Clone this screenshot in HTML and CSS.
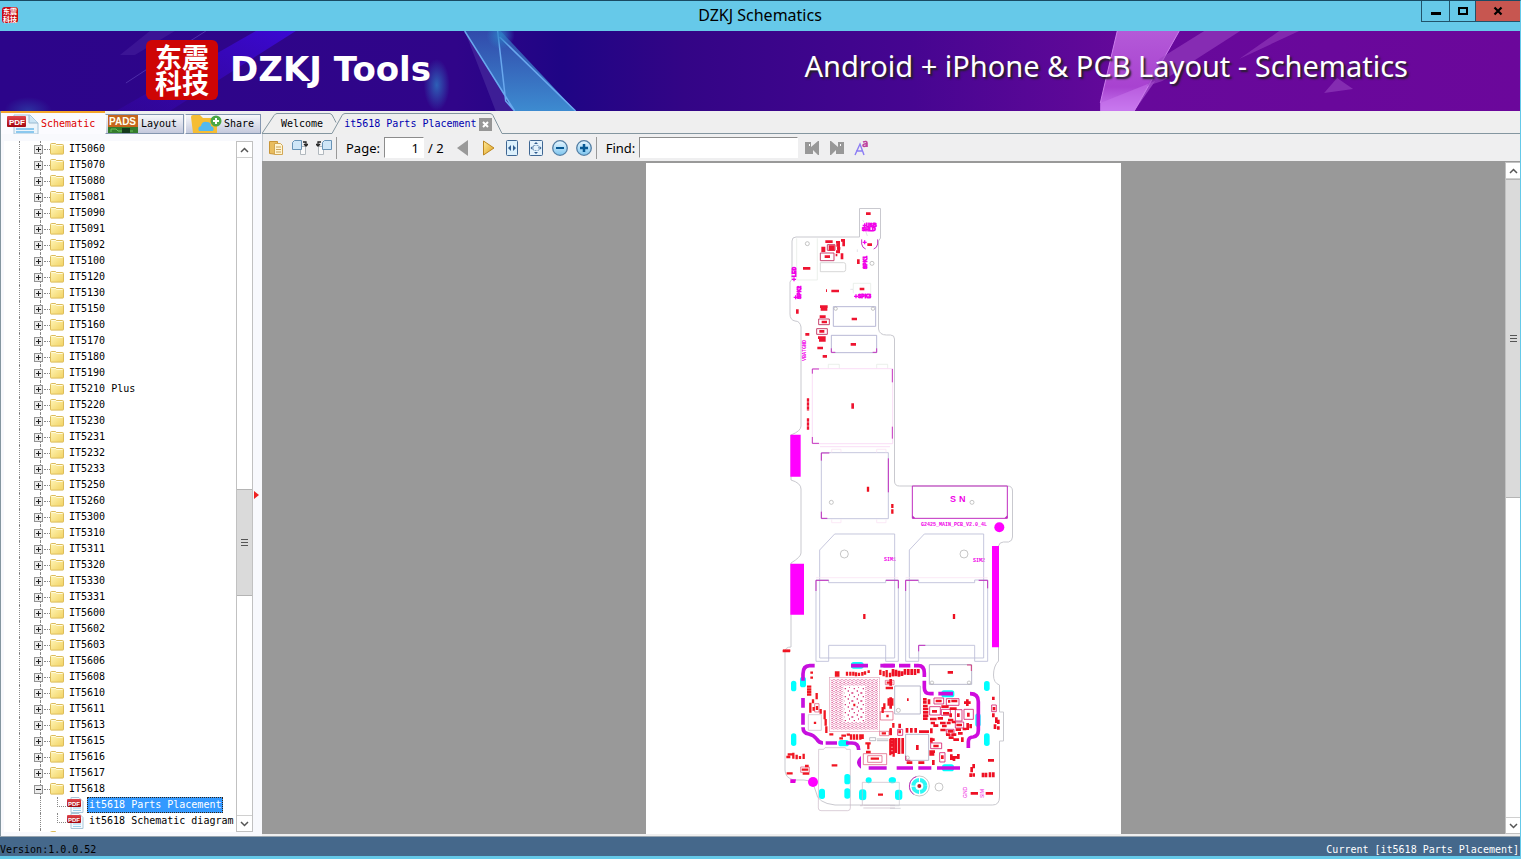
FILE: index.html
```html
<!DOCTYPE html>
<html lang="en">
<head>
<meta charset="utf-8">
<title>DZKJ Schematics</title>
<link rel="stylesheet" href="styles.css">
</head>
<body>
<svg class="defs" aria-hidden="true">
  <defs>
    <linearGradient id="gFolder" x1="0" y1="0" x2="1" y2="1"><stop offset="0" stop-color="#fff6b8"/><stop offset="1" stop-color="#f2d262"/></linearGradient>
    <linearGradient id="gRed" x1="0" y1="0" x2="0" y2="1"><stop offset="0" stop-color="#e2474d"/><stop offset="1" stop-color="#a3060f"/></linearGradient>
    <linearGradient id="gBlue" x1="0" y1="0" x2="0" y2="1"><stop offset="0" stop-color="#e8f7ff"/><stop offset="1" stop-color="#7cc4ee"/></linearGradient>
    <linearGradient id="gGold" x1="0" y1="0" x2="1" y2="1"><stop offset="0" stop-color="#ffeb9a"/><stop offset="1" stop-color="#dd9f1e"/></linearGradient>
    <symbol id="folder" viewBox="0 0 14 14"><path d="M.5 11.500V2.500q0-1 1-1h4l1 1h6q1 0 1 1v8q0 .6-.6.6H1q-.5 0-.5-.6z" fill="url(#gFolder)" stroke="#dcbc5c"/><path d="M1.500 2.500h4l1 1h6" fill="none" stroke="#fffbe0"/></symbol>
    <symbol id="pdf" viewBox="0 0 17 16"><path d="M4 .5h8l4 4v11H4z" fill="#f5faff" stroke="#aac6d8"/><path d="M6 11h8M6 13.500h8" stroke="#9bd0ec"/><rect y="2" width="14" height="8" rx="1" fill="url(#gRed)"/><text x="1" y="9" font-size="6" font-weight="bold" font-family="Liberation Sans" fill="#fff">PDF</text></symbol>
    <symbol id="up" viewBox="0 0 9 6"><path d="M1 5l3.500-3.500L8 5" fill="none" stroke="#555" stroke-width="1.500"/></symbol>
    <symbol id="down" viewBox="0 0 9 6"><path d="M1 1l3.500 3.500L8 1" fill="none" stroke="#555" stroke-width="1.500"/></symbol>
  </defs>
</svg>
<div class="window">
  <header class="titlebar">
    <span class="mini-logo">东震<br>科技</span>
    <h1>DZKJ Schematics</h1>
    <div class="controls">
      <button class="min" aria-label="Minimize"><svg width="12" height="12"><path d="M1 8.500h10" stroke="#000" stroke-width="3"/></svg></button>
      <button class="max" aria-label="Maximize"><svg width="12" height="12"><path d="M2 3h8v6H2z" fill="none" stroke="#000" stroke-width="2"/></svg></button>
      <button class="close" aria-label="Close"><svg width="12" height="12"><path d="M2.500 2.500l7 7M9.500 2.500l-7 7" stroke="#000" stroke-width="2.200"/></svg></button>
    </div>
  </header>

  <div class="banner">
    <svg class="banner-art" viewBox="0 0 1521 80" preserveAspectRatio="none" aria-hidden="true">
      <defs>
        <linearGradient id="bBase"><stop offset="0" stop-color="#2c058a"/><stop offset=".3" stop-color="#300589"/><stop offset=".37" stop-color="#1f0585"/><stop offset=".45" stop-color="#330586"/><stop offset=".6" stop-color="#460591"/><stop offset=".75" stop-color="#67099b"/><stop offset="1" stop-color="#6b079b"/></linearGradient>
        <linearGradient id="bRay" x1="0" y1="1" x2="1" y2="0"><stop offset="0" stop-color="#3906b8" stop-opacity=".3"/><stop offset="1" stop-color="#3d09e0"/></linearGradient>
        <linearGradient id="bTri" x1="0" y1="0" x2="0" y2="1"><stop offset="0" stop-color="#314aab"/><stop offset="1" stop-color="#3d8bd0"/></linearGradient>
        <linearGradient id="bPink" x1="0" y1="0" x2="0" y2="1"><stop offset="0" stop-color="#b45ad8"/><stop offset=".7" stop-color="#a842d0"/><stop offset="1" stop-color="#c77af0"/></linearGradient>
        <radialGradient id="bGlow"><stop offset="0" stop-color="#2d83c8" stop-opacity=".9"/><stop offset="1" stop-color="#2d83c8" stop-opacity="0"/></radialGradient>
      </defs>
      <rect width="1521" height="80" fill="url(#bBase)"/>
      <path d="M256 0h40L170 80h-54z" fill="url(#bRay)" opacity=".85"/>
      <path d="M150 0h25l-40 24h-15z" fill="#4f2ba5" opacity=".4"/>
      <path d="M206 0l-22 14M172 22l-46 30" stroke="#765fd0" opacity=".45"/>
      <ellipse cx="437" cy="54" rx="13" ry="26" fill="url(#bGlow)" opacity=".8"/>
      <ellipse cx="28" cy="80" rx="24" ry="14" fill="url(#bGlow)" opacity=".4"/>
      <path d="M465 0h36l75 80h-62z" fill="url(#bTri)"/>
      <path d="M465 0l49 80h-18z" fill="#4b2fa0" opacity=".6"/>
      <path d="M465 0l50 80M498 0l8 70 9 10M500 6l76 74" fill="none" stroke="#69a8ee" stroke-width="1.500"/>
      <ellipse cx="501" cy="4" rx="14" ry="14" fill="url(#bGlow)"/>
      <path d="M1118 0h62l-45 80h-34v-8z" fill="url(#bPink)"/>
      <path d="M1101 72l55-22-21 30h-34z" fill="#ca78ee" opacity=".5"/>
      <path d="M1118 0l-17 72M1180 0l-45 80" stroke="#cc7ded"/>
      <path d="M1205 0h36l-78 50-15 5 12-27z" fill="#9b45c3" opacity=".6"/>
      <path d="M1280 0h20l-60 28z" fill="#953ebd" opacity=".6"/>
      <path d="M1325 62l13-15 16 11z" fill="#9440bd" opacity=".65"/>
    </svg>
    <span class="logo"><span>东震</span><span>科技</span></span>
    <strong class="brand">DZKJ Tools</strong>
    <span class="tagline">Android + iPhone &amp; PCB Layout - Schematics</span>
  </div>

  <main class="body">
    <aside class="side">
      <nav class="side-tabs">
        <button class="side-tab active">
          <svg width="33" height="20"><path d="M7 1h16l8 8v11H7z" fill="#edf5fb" stroke="#a6c5da"/><path d="M22 1v8h9" fill="#cce5f5" stroke="#9bbad0"/><path d="M9 15h18M9 18h18" stroke="#8bc8ee" stroke-width="2"/><rect y="2" width="19" height="11" rx="1" fill="url(#gRed)"/><text x="2" y="11" font-family="Liberation Sans" font-size="8" font-weight="bold" fill="#fff">PDF</text></svg>
          Schematic</button>
        <button class="side-tab layout-tab">
          <svg width="30" height="18"><rect width="30" height="18" fill="#347c2c"/><rect width="30" height="12" fill="#c6651c"/><path d="M3 17v-3h5l2 2h15" fill="none" stroke="#69c15b"/><rect x="14" y="13" width="8" height="5" fill="#143a1c"/><text x="1" y="10" font-family="Liberation Sans" font-size="10" font-weight="bold" fill="#ffe">PADS</text></svg>
          Layout</button>
        <button class="side-tab share-tab">
          <svg width="32" height="18"><path d="M1 2q0-2 2-2h7l3 3h12q2 0 2 2v13H3z" fill="#f6bd33"/><path d="M9 16q-2-4 2-5 1-5 6-4 4 0 4 4 4 1 2 5z" fill="#53b9f0"/><circle cx="26" cy="6" r="5.500" fill="#4aa746"/><path d="M26 3v6M23 6h6" stroke="#fff" stroke-width="2"/></svg>
          Share</button>
      </nav>
      <div class="tree-wrap">
        <ul class="tree">
          <li><button aria-label="Expand"></button><svg><use href="#folder"/></svg>IT5060</li>
          <li><button aria-label="Expand"></button><svg><use href="#folder"/></svg>IT5070</li>
          <li><button aria-label="Expand"></button><svg><use href="#folder"/></svg>IT5080</li>
          <li><button aria-label="Expand"></button><svg><use href="#folder"/></svg>IT5081</li>
          <li><button aria-label="Expand"></button><svg><use href="#folder"/></svg>IT5090</li>
          <li><button aria-label="Expand"></button><svg><use href="#folder"/></svg>IT5091</li>
          <li><button aria-label="Expand"></button><svg><use href="#folder"/></svg>IT5092</li>
          <li><button aria-label="Expand"></button><svg><use href="#folder"/></svg>IT5100</li>
          <li><button aria-label="Expand"></button><svg><use href="#folder"/></svg>IT5120</li>
          <li><button aria-label="Expand"></button><svg><use href="#folder"/></svg>IT5130</li>
          <li><button aria-label="Expand"></button><svg><use href="#folder"/></svg>IT5150</li>
          <li><button aria-label="Expand"></button><svg><use href="#folder"/></svg>IT5160</li>
          <li><button aria-label="Expand"></button><svg><use href="#folder"/></svg>IT5170</li>
          <li><button aria-label="Expand"></button><svg><use href="#folder"/></svg>IT5180</li>
          <li><button aria-label="Expand"></button><svg><use href="#folder"/></svg>IT5190</li>
          <li><button aria-label="Expand"></button><svg><use href="#folder"/></svg>IT5210 Plus</li>
          <li><button aria-label="Expand"></button><svg><use href="#folder"/></svg>IT5220</li>
          <li><button aria-label="Expand"></button><svg><use href="#folder"/></svg>IT5230</li>
          <li><button aria-label="Expand"></button><svg><use href="#folder"/></svg>IT5231</li>
          <li><button aria-label="Expand"></button><svg><use href="#folder"/></svg>IT5232</li>
          <li><button aria-label="Expand"></button><svg><use href="#folder"/></svg>IT5233</li>
          <li><button aria-label="Expand"></button><svg><use href="#folder"/></svg>IT5250</li>
          <li><button aria-label="Expand"></button><svg><use href="#folder"/></svg>IT5260</li>
          <li><button aria-label="Expand"></button><svg><use href="#folder"/></svg>IT5300</li>
          <li><button aria-label="Expand"></button><svg><use href="#folder"/></svg>IT5310</li>
          <li><button aria-label="Expand"></button><svg><use href="#folder"/></svg>IT5311</li>
          <li><button aria-label="Expand"></button><svg><use href="#folder"/></svg>IT5320</li>
          <li><button aria-label="Expand"></button><svg><use href="#folder"/></svg>IT5330</li>
          <li><button aria-label="Expand"></button><svg><use href="#folder"/></svg>IT5331</li>
          <li><button aria-label="Expand"></button><svg><use href="#folder"/></svg>IT5600</li>
          <li><button aria-label="Expand"></button><svg><use href="#folder"/></svg>IT5602</li>
          <li><button aria-label="Expand"></button><svg><use href="#folder"/></svg>IT5603</li>
          <li><button aria-label="Expand"></button><svg><use href="#folder"/></svg>IT5606</li>
          <li><button aria-label="Expand"></button><svg><use href="#folder"/></svg>IT5608</li>
          <li><button aria-label="Expand"></button><svg><use href="#folder"/></svg>IT5610</li>
          <li><button aria-label="Expand"></button><svg><use href="#folder"/></svg>IT5611</li>
          <li><button aria-label="Expand"></button><svg><use href="#folder"/></svg>IT5613</li>
          <li><button aria-label="Expand"></button><svg><use href="#folder"/></svg>IT5615</li>
          <li><button aria-label="Expand"></button><svg><use href="#folder"/></svg>IT5616</li>
          <li><button aria-label="Expand"></button><svg><use href="#folder"/></svg>IT5617</li>
          <li><button class="open" aria-label="Collapse"></button><svg><use href="#folder"/></svg>IT5618</li>
          <li class="leaf"><svg><use href="#pdf"/></svg><a class="selected" href="#sheet">it5618 Parts Placement</a></li>
          <li class="leaf last"><svg><use href="#pdf"/></svg><a href="#sheet">it5618 Schematic diagram</a></li>
          <li><button aria-label="Expand"></button><svg><use href="#folder"/></svg></li>
        </ul>
        <div class="scroll">
          <button aria-label="Scroll up"><svg width="9" height="6"><use href="#up"/></svg></button>
          <div class="gap-before"></div><div class="thumb"></div><div class="gap-after"></div>
          <button aria-label="Scroll down"><svg width="9" height="6"><use href="#down"/></svg></button>
        </div>
        <div class="splitter"><svg width="5" height="8"><path d="M0 0l5 4-5 4z" fill="#e22"/></svg></div>
      </div>
    </aside>

    <section class="doc">
      <nav class="doc-tabs">
        <svg class="tab-lines" width="241" height="24" aria-hidden="true"><path d="M0 22.500L12 4.500q1.500-2 3-2h53q2 0 4 5l2 4M0 22.500h70L80 4.500q1-2 3-2h145q2 0 3 2l9 18h1" fill="none" stroke="#8496a0"/></svg>
        <button class="welcome">Welcome</button>
        <button class="current">it5618 Parts Placement</button>
        <button class="tab-close" aria-label="Close tab"><svg width="13" height="13"><rect width="13" height="13" fill="#969696"/><path d="M4 4l5 5M9 4l-5 5" stroke="#fff" stroke-width="2"/></svg></button>
      </nav>
      <div class="toolbar">
        <button aria-label="Copy"><svg width="16" height="16"><path d="M1.500 1.500h8v13l-8-1z" fill="#e9bd5e" stroke="#c99536"/><path d="M6.500 3.500h6l2 2v9h-8z" fill="#fff5d2" stroke="#d2a754"/><path d="M8 7h5M8 9.500h5M8 12h5" stroke="#c9a25b"/></svg></button>
        <button aria-label="Rotate right"><svg width="16" height="16"><path d="M8.500 6.500h5v8h-5z" fill="#fafafa" stroke="#b1b8be"/><path d="M2.500.5h7v9h-9v-7z" fill="#cfe6f7" stroke="#6893b6"/><path d="M11 2h3v3M12 4l2 2 2-2" fill="none" stroke="#222" stroke-width="1.300"/></svg></button>
        <button aria-label="Rotate left"><svg width="16" height="16"><path d="M2.500 6.500h5v8h-5z" fill="#fafafa" stroke="#b1b8be"/><path d="M8.500.5h7v9h-9v-7z" fill="#cfe6f7" stroke="#6893b6"/><path d="M5 2H2v3M0 4l2 2 2-2" fill="none" stroke="#222" stroke-width="1.300"/></svg></button>
        <span class="sep"></span>
        <label for="page">Page:</label>
        <input id="page" class="page-input" value="1">
        <span class="total">/ 2</span>
        <button class="prev" aria-label="Previous page"><svg width="12" height="16"><path d="M11 0v16L0 8z" fill="#999"/></svg></button>
        <button class="next" aria-label="Next page"><svg width="12" height="16"><path d="M.5 1v14L11 8z" fill="url(#gGold)" stroke="#bd8620"/></svg></button>
        <button aria-label="Fit width"><svg width="14" height="16"><rect x="1.500" y=".5" width="11" height="15" rx="1" fill="#dcf0fc" stroke="#3e6693"/><path d="M6 5L3 8l3 3zM8 5l3 3-3 3z" fill="#315e91"/></svg></button>
        <button aria-label="Fit page"><svg width="14" height="16"><rect x=".5" y=".5" width="13" height="15" rx="1" fill="#e4f2fc" stroke="#3e6693"/><path d="M7 2l2 2H5zM7 14l2-2H5zM1.500 8l2-2v4zM12.500 8l-2-2v4z" fill="#315e91"/><rect x="4.500" y="5.500" width="5" height="5" fill="none" stroke="#84a5c5" stroke-dasharray="2 1"/></svg></button>
        <button aria-label="Zoom out"><svg width="16" height="16"><circle cx="8" cy="8" r="7.300" fill="url(#gBlue)" stroke="#547fa5" stroke-width="1.300"/><path d="M4 8h8" stroke="#075994" stroke-width="2"/></svg></button>
        <button aria-label="Zoom in"><svg width="16" height="16"><circle cx="8" cy="8" r="7.300" fill="url(#gBlue)" stroke="#547fa5" stroke-width="1.300"/><path d="M4 8h8M8 4v8" stroke="#075994" stroke-width="2.500"/></svg></button>
        <span class="sep"></span>
        <label for="find">Find:</label>
        <input id="find" class="find-input">
        <button class="find-btn" aria-label="Find previous"><svg width="16" height="16"><path d="M1 2h6v5l7-6h1v14h-1l-5-5v4H1z" fill="#989898"/><path d="M5 4h1v2H5z" fill="#fff"/></svg></button>
        <button class="find-btn" aria-label="Find next"><svg width="16" height="16"><path d="M15 2H9v5L2 1H1v14h1l5-5v4h8z" fill="#989898"/><path d="M11 4h1v2h-1z" fill="#fff"/></svg></button>
        <button class="find-btn" aria-label="Match case"><svg width="16" height="16"><path d="M1 15L6 4l4 11M2 11h7" fill="none" stroke="#8c7df4" stroke-width="1.400"/><path d="M9 2q4-1.500 4 1v4M13 4q-4-.5-4 1.500t4 0" fill="none" stroke="#bd419e" stroke-width="1.600"/></svg></button>
      </div>
      <div class="viewer">
        <div class="canvas">
          <svg class="sheet" id="sheet" width="475" height="671" viewBox="646 163 475 671" role="img" aria-label="Parts placement">
            <defs>
              <pattern id="balls" width="12" height="12" patternUnits="userSpaceOnUse"><path d="M1 2h5M7 5h4M1 8h4M7 11h3" stroke="#d63c84" stroke-width="2.500"/></pattern>
              <pattern id="fine" width="27" height="24" patternUnits="userSpaceOnUse"><path d="M2 3h4M13 9h6M6 15h3M20 20h4" stroke="#d63c7c" stroke-width="4"/></pattern>
            </defs>
            <!-- board outline -->
            <path fill="none" stroke="#c9c9cf" d="M859.500 237v-28.500h21V238l-2 3v88q1 6 8 6h4q4 0 4 4v142q0 5 5 5h108q5 0 5 5v46q0 4-4 5h-5q-4 0-5 4v115q-5 5-5 14 0 8 6 10v27h4v29h-4v56q0 8-7 8H835q-18-2-19-13-3-12-12-12h-10q-9-2-9-10V652q0-5 6-5v-84q10-6 10-10v-64q0-6-10-9v-45q10-4 10-9V327q-1-6-6-6-5-1-5-7v-32l2-3v-38q0-4 4-4z"/>
            <!-- upper half, traced at three units per pixel -->
            <g transform="translate(770 200) scale(.33333)">
              <path fill="none" stroke="#e3e8e3" stroke-width="2" d="M80 115v125h62V115M250 280v-30h52v32M175 505v-12h33v12M320 505v-12h33v12"/>
              <path fill="none" stroke="#c4c4c4" stroke-width="2" d="M151 188h70q6 0 6 6v15q0 6-6 6h-70z"/>
              <path fill="none" stroke="#aaaacc" stroke-width="2.500" d="M190 320h127v59H190zM184 406h136v52H184z"/>
              <g fill="none" stroke="#a8a8a8" stroke-width="2"><circle cx="112" cy="131" r="6"/><circle cx="306" cy="190" r="6"/><circle cx="197" cy="326" r="5"/><circle cx="309" cy="326" r="5"/></g>
              <path fill="none" stroke="#f8cdf2" stroke-width="2" d="M127 506h241v225H127zM150 740h210"/>
              <path fill="none" stroke="#c434c0" stroke-width="3" d="M127 521v-14h20M127 711v19h20M367 507v40M367 680v36M184 445v12h12M308 457h12v-12M275 118v14q2 12 12 15M323 118v14q-2 12-12 15"/>
              <path fill="none" stroke="#c8406c" stroke-width="3" d="M151 159h41v23h-41zM146 357h32v17h-32zM140 386h32v17h-32zM172 134h23v17h-23z"/>
              <path fill="none" stroke="#ee1430" stroke-width="8" d="M166 125h22M213 121h8v18M154 144h12M154 152h12M176 140h18M176 148h18M198 127h12M199 136h10M201 145h10M198 155h10M197 165h5M216 160v18M206 128v32M164 170h16M288 41h14M292 134h14M265 178v14M99 205h22M168 272h3M184 273h23M269 267h14M245 357h16M242 433h16M82 328v13M150 320h23M152 328h20M149 350h18M155 366h16M148 394h15M144 413h23M147 421h20M142 444h17M158 469h13M106 403h12M248 610v16"/>
              <path stroke="#ee1430" stroke-width="7" stroke-dasharray="10 2" d="M114 595v37M114 655v34"/>
              <path stroke="#f006ed" stroke-width="4" d="M278 76h12M284 70v12M278 127h12M284 121v12M252 289h12M258 283v12M66 238h12M72 232v12M71 292h12M77 286v12"/>
              <path fill="none" stroke="#aab" d="M278 60l4 7M262 148v8M288 96l4 12M241 268h8"/>
            </g>
            <g fill="#f000e8" font-family="Liberation Sans" font-weight="bold">
              <g font-size="5" stroke="#f000e8" stroke-width=".8"><text x="866" y="227">USB</text><text x="862" y="231">SHLD</text><text x="858" y="298">SPK3</text><text x="796" y="277" transform="rotate(-90 796 277)">LED</text><text x="801" y="299" transform="rotate(-90 801 299)">SPK2</text><text x="867" y="269" transform="rotate(-90 867 269)">SPK1</text></g>
              <g font-size="5" font-family="Liberation Mono"><text x="806" y="361" transform="rotate(-90 806 361)">VBAT</text><text x="806" y="349" transform="rotate(-90 806 349)">GND</text><text x="884" y="561">SIM1</text><text x="973" y="562">SIM2</text></g>
              <text x="950" y="502" font-size="9" font-family="Liberation Sans">S</text>
              <text x="959" y="502" font-size="9" font-family="Liberation Sans">N</text>
              <text x="921" y="526" font-size="5" font-family="Liberation Mono">G2425_MAIN_PCB_V2.0_4L</text>
            </g>
            <!-- card slots and edge contacts -->
            <g transform="translate(770 430) scale(.33333)">
              <path fill="#f0f" d="M61 14h31v126H61zM61 401h41v153H61zM666 348h21v304h-21z"/><circle cx="688" cy="292" r="15" fill="#f0f"/>
              <path fill="none" stroke="#babcd6" stroke-width="2.500" d="M154 68h201v198H154zM149 684V360l45-48h180v372M149 684h225M418 684V360l45-48h178v372M418 684h223M138 450h38v8h171v-8h38M138 450v244h38v-48h171v48h38V450M407 450h39v8h168v-8h39M407 450v244h39v-48h168v48h39V450"/>
              <path fill="none" stroke="#f9dff3" stroke-width="2" d="M185 68v-10h28v10M320 68v-10h28v10M185 268v10h28v-10M320 268v10h28v-10M138 443h247M407 443h246"/>
              <path fill="none" stroke="#c02cc0" stroke-width="3" d="M427 168h285v97H427zM154 92V69h24M355 85v102M154 245v20h18M138 483v-32h38M348 451h37v24M407 483v-32h38M626 451h27v24M446 664v-18h20"/>
              <path fill="#c02cc0" d="M427 265v-9l9 9zM712 265v-9l-9 9z"/>
              <g fill="none" stroke="#aaa" stroke-width="2"><circle cx="184" cy="217" r="6"/><circle cx="606" cy="217" r="6"/><circle cx="223" cy="372" r="12"/><circle cx="582" cy="372" r="12"/></g>
              <path stroke="#ed1020" stroke-width="7" d="M294 170v15M367 222v12M367 238v13M283 552v15M552 552v15M38 663h22"/>
            </g>
            <!-- lower left: processor area -->
            <g transform="translate(775 650) scale(.33333)">
              <g fill="#0ff"><rect x="48" y="92" width="16" height="32" rx="8"/><rect x="48" y="250" width="16" height="38" rx="8"/><rect x="75" y="80" width="18" height="32" rx="8"/><rect x="228" y="36" width="38" height="20" rx="8"/><rect x="190" y="270" width="32" height="19" rx="8"/><rect x="208" y="372" width="18" height="31" rx="8"/><rect x="208" y="415" width="18" height="31" rx="8"/><rect x="132" y="416" width="18" height="31" rx="8"/><circle cx="281" cy="391" r="9"/><circle cx="350" cy="391" r="9"/><rect x="252" y="418" width="22" height="33" rx="10"/></g>
              <path fill="none" stroke="#c610de" stroke-width="11" d="M84 92V72q0-25 20-25h15M228 47h51M316 47h44M84 144v29M84 190v34M84 232q0 18 17 20 15 3 24 15 7 12 19 12M152 279h34M213 279h18q20 0 20 21M281 354h54"/>
              <path d="M258 318v38q-24-18 0-38z" fill="#c610de"/><circle cx="114" cy="396" r="15" fill="#f0f"/>
              <path fill="#e000db" d="M46 388h17l-2 11H46z"/>
              <rect x="163" y="82" width="150" height="162" fill="none" stroke="#e2a6bb" stroke-width="2"/>
              <path fill="url(#balls)" d="M167 87h38v152h-38zM270 87h39v152h-39zM205 87h65v20h-65zM205 217h65v22h-65z"/>
              <rect x="207" y="111" width="62" height="104" fill="url(#fine)"/>
              <path fill="none" stroke="#c8b6c5" stroke-width="2" d="M100 194h39v47h-39zM131 298h15l4-5h61l3 5h12v176q0 8-8 8h-80q-8 0-8-8zM360 397h-98v70h-7M265 474h95M265 466h95"/>
              <path fill="none" stroke="#dc4a70" stroke-width="2" d="M265 311h70v33h-70zM278 317h43v20h-43zM316 185h38v25h-38zM314 244h28v13h-28zM119 161h13v25h-13zM77 351h26v16H77zM331 91h26v13h-26z"/>
              <path fill="none" stroke="#f01622" stroke-width="7" d="M24 2h22M106 68h8M106 83h8M183 64v16M190 64v16M216 65v12M226 65v12M235 65v12M243 67v12M252 68v10M262 66v11M270 64v10M281 61v8M316 59v16M326 63v16M335 60v22M345 68v14M354 65v14M335 98h17M332 114h22M96 110h13M96 118h13M96 126h13M96 134h13M125 129v19M114 148v12M106 158v30M126 168v12M137 177v14M116 171v11M120 215v7M149 181v27M152 207v20M154 229v20M163 253h12M193 265h11M199 257h14M215 254h10M228 253v16M237 253v16M246 253v16M256 253v16M263 253v14M235 165h6M271 280h16M280 280v18M273 306h14M287 326h25M170 346h17M309 434h15M34 321h12M38 313h14M55 308v18M65 314v14M75 318v9M86 311v16M35 370h18M90 348h11M80 359h20M83 371h20M341 145v22M352 145v22M328 160v18M323 171v18M334 198h7M320 250h13M347 234v22M355 219v14M346 266v50M356 266v54"/>
              <path fill="none" stroke="#a0a0aa" stroke-width="2" d="M284 263h18v9h-18zM306 267h34M306 272h34"/>
            </g>
            <!-- lower right: power and radio area -->
            <g transform="translate(890 650) scale(.33333)">
              <g fill="#0ff"><rect x="282" y="93" width="17" height="30" rx="8"/><rect x="282" y="250" width="17" height="38" rx="8"/><rect x="256" y="190" width="16" height="41" rx="8"/><rect x="154" y="121" width="39" height="21" rx="8"/><rect x="156" y="343" width="36" height="21" rx="8"/><circle cx="9" cy="391" r="9"/><rect x="15" y="419" width="22" height="31" rx="9"/></g>
              <path fill="none" stroke="#cf0bdd" stroke-width="11" d="M-20 47h31M27 47h34M72 47h13q18 0 18 22v12M103 92v21q0 18 18 18h10M145 131h44M240 131q25 0 25 24v86q0 18-16 20-14 0-14 15v18M20 354h49M85 354h39M141 354h69"/>
              <path fill="none" stroke="#a9aac0" stroke-width="2.500" d="M118 44h127v59H118zM14 108h77v84H14zM47 253h69v78H47z"/>
              <path fill="none" stroke="#c6c6cf" stroke-width="2" d="M0 397h28v70H0M0 475h32"/>
              <g fill="none" stroke="#aaa" stroke-width="2"><circle cx="25" cy="181" r="6"/><circle cx="53" cy="323" r="5"/><circle cx="126" cy="98" r="5"/><circle cx="237" cy="98" r="5"/><circle cx="147" cy="411" r="12"/><circle cx="88" cy="408" r="30"/></g>
              <circle cx="88" cy="408" r="18" fill="none" stroke="#2df7f4" stroke-width="12" stroke-dasharray="25 3.270"/>
              <path d="M71 433a30 30 0 0 1 8-53" fill="none" stroke="#c030c0" stroke-width="3"/><circle cx="88" cy="408" r="6" fill="#c41a26"/>
              <path fill="none" stroke="#d52070" stroke-width="2.500" d="M132 144h29v18h-29zM169 146h38v20h-38zM119 170h32v25h-32zM154 178h27v18h-27zM196 179h20v34h-20zM222 178h28v30h-28zM196 216h25v18h-25zM169 238h23v17h-23zM122 279h33v17h-33zM149 308h16v28h-16zM23 238h15v18H23zM305 165h14v20h-14zM47 317v14h14M231 45h13v18"/>
              <path fill="none" stroke="#ee1024" stroke-width="8" d="M9 57v22M18 59v20M27 62v18M36 64v14M45 57v17M55 57v18M65 57v18M75 57v18M85 57v13M99 148h11M99 157h11M99 168h14M99 177h16M99 187h16M99 197h16M99 206h14M117 148v15M137 153h18M174 154h7M184 153h18M154 170h22M179 176h21M126 184h15M159 190h18M182 190v12M205 190v11M235 188v12M120 207h20M143 205h16M122 219h13M130 227h15M150 219h17M156 228h14M174 210h16M170 219h12M185 216h12M199 225h17M151 240h16M173 244h17M197 239h16M218 237h11M233 219v21M242 222v13M168 254h13M184 254h15M204 250h14M176 263h15M190 269h17M217 262v14M222 158h20M232 148v20M51 149h5M82 285v15M29 221v13M29 241v9M51 234v14M64 234v14M77 234v14M87 245h30M124 235v15M120 269h14M124 263v15M130 288h16M118 305h17M118 313h15M130 330v15M157 316v11M50 338h17M85 338h18M172 301h15M181 322h22M184 313v17M192 321v12M205 312v15M0 268h12M0 277h12M0 286h12M0 297h12M0 308h12M17 264v45M27 264v48M38 264v47M2 87v20M2 142v34M2 238v17M173 67h16M310 140v10M312 171v10M310 190v12M319 202v17M325 209v13M315 223v14M325 229v10M294 331h18M251 342v13M245 351v16M242 370v11M251 370v10M279 368v14M288 368v14M300 367v15M310 367v15M242 430h22M287 430h22"/>
            </g>
            <g font-size="5" fill="#ee00dc" font-family="Liberation Sans"><text x="967" y="798" transform="rotate(-90 967 798)">GND</text><text x="984" y="798" transform="rotate(-90 984 798)">SIM</text></g>
          </svg>
        </div>
        <div class="scroll doc-scroll">
          <button aria-label="Scroll page up"><svg width="9" height="6"><use href="#up"/></svg></button>
          <div class="thumb"></div><div class="gap-after"></div>
          <button aria-label="Scroll page down"><svg width="9" height="6"><use href="#down"/></svg></button>
        </div>
      </div>
    </section>
  </main>
  <footer class="status"><span>Version:1.0.0.52</span><span class="now">Current [it5618 Parts Placement]</span></footer>
</div>
</body>
</html>
```

FILE: styles.css
```css
* { box-sizing: border-box; }
html, body { margin: 0; height: 100%; }
body { overflow: hidden; font: 10px/16px "DejaVu Sans Mono", monospace; color: #000; }
button { margin: 0; padding: 0; border: 0; background: none; font: inherit; color: inherit; display: flex; align-items: center; justify-content: center; flex-shrink: 0; }
svg { display: block; flex-shrink: 0; }
.defs { position: absolute; width: 0; height: 0; }
.window { display: flex; flex-direction: column; height: 100vh; border-top: 1px solid #194a63; border-right: 1px solid #64c9e9; border-bottom: 3px solid #64c9e9; background: #efefef; }

.titlebar { display: grid; grid-template-columns: 1fr auto 1fr; height: 30px; flex-shrink: 0; background: #66c9e9; }
.titlebar h1 { margin: 0; font: 16px/28px "Noto Sans", sans-serif; }
.mini-logo { width: 16px; height: 16px; margin: 6px 0 0 2px; border-radius: 3px; background: #c90b13; color: #fff; font: bold 7px/8px "Noto Sans CJK SC", sans-serif; text-align: center; }
.controls { display: flex; justify-content: flex-end; height: 21px; }
.controls button { width: 28px; border: 1px solid #21526a; border-top: 0; border-right: 0; }
.controls .max { width: 26px; }
.controls .close { width: 45px; background: #c75650; }

.banner { position: relative; display: flex; align-items: center; height: 80px; flex-shrink: 0; padding: 0 112px 2px 146px; color: #fff; overflow: hidden; }
.banner-art { position: absolute; inset: 0; width: 100%; height: 100%; }
.logo, .brand, .tagline { position: relative; white-space: nowrap; }
.logo { display: flex; flex-direction: column; justify-content: center; width: 72px; height: 60px; border-radius: 6px; background: #ce0505; font: bold 27px/26px "Noto Sans CJK SC", sans-serif; text-align: center; }
.brand { margin: 0 0 2px 12px; font: bold 34px/40px "DejaVu Sans", sans-serif; }
.tagline { margin: 0 0 8px auto; font: 29px/40px "Noto Sans", sans-serif; text-shadow: 2px 2px 2px #222; }

.body { display: flex; flex: 1; min-height: 0; }
.side { display: flex; flex-direction: column; width: 262px; flex-shrink: 0; border-left: 1px solid #8496a0; background: #f8f9fd; }
.side-tabs { display: flex; align-items: flex-end; height: 23px; flex-shrink: 0; background: #efefef; }
.side-tab { height: 20px; gap: 2px; justify-content: flex-start; border: 1px solid #8496b0; border-left-color: #fff; background: linear-gradient(#f8f8fb, #c4c9dd); overflow: hidden; }
.side-tab.active { width: 104px; height: 23px; gap: 1px; padding-left: 6px; border: 0; border-top: 2px solid #f4a52a; background: #fbfbff; color: #d00; }
.layout-tab { width: 79px; padding-left: 2px; gap: 3px; }
.share-tab { width: 76px; padding-left: 4px; margin-left: 1px; }
.tree-wrap { display: flex; flex: 1; min-height: 0; padding: 7px 0 4px 3px; }
.tree { flex: 1; min-width: 0; margin: 0; padding: 0; list-style: none; overflow: hidden; background: #fff; }
.tree li { position: relative; display: flex; align-items: center; height: 16px; padding-left: 30px; white-space: nowrap; line-height: 16px; }
.tree li::before { content: ""; position: absolute; inset: 0 auto 0 15px; width: 20px; border: dotted #888; border-width: 0 1px; }
.tree li > svg { width: 14px; height: 14px; margin: 0 5px 0 7px; }
.tree li button { position: relative; width: 9px; height: 9px; border: 1px solid #949494; background: linear-gradient(#222, #222) center / 5px 1px no-repeat, linear-gradient(#222, #222) center / 1px 5px no-repeat, #ececec; }
.tree li button.open { background: linear-gradient(#222, #222) center / 5px 1px no-repeat, #ececec; }
.tree li::after { content: ""; position: absolute; left: 40px; top: 8px; width: 6px; border-top: 1px dotted #888; }
.tree li.leaf { padding-left: 63px; }
.tree li.leaf > svg { width: 17px; height: 16px; margin: 0 3px 0 0; }
.tree li.leaf::before { border-left-width: 1px; }
.tree li.leaf::after { left: 53px; top: 0; width: 10px; height: 9px; border: dotted #888; border-width: 0 0 1px 1px; }
.tree a { padding: 0 1px; border: 1px solid transparent; line-height: 14px; color: inherit; text-decoration: none; }
.tree a.selected { background: #3399ff; color: #fff; border: 1px dotted #321; }
.scroll { display: flex; flex-direction: column; width: 17px; flex-shrink: 0; border: 1px solid #c1c1c1; background: #fff; }
.scroll button { height: 16px; background: #fff; border-bottom: 1px solid #d0d0d0; }
.scroll button:last-child { border: 0; border-top: 1px solid #d0d0d0; }
.scroll .thumb { flex: 105; border: 1px solid #b4b4b4; border-width: 1px 0; background: linear-gradient(#555 0 1px, transparent 1px 3px, #555 3px 4px, transparent 4px 6px, #555 6px 7px) center / 7px 7px no-repeat, #dadada; }
.scroll .gap-before { flex: 332; }
.scroll .gap-after { flex: 220; }
.splitter { display: flex; align-items: center; width: 9px; padding: 16px 0 0 1px; flex-shrink: 0; }

.doc { display: flex; flex-direction: column; flex: 1; min-width: 0; }
.doc-tabs { position: relative; display: flex; align-items: center; height: 23px; flex-shrink: 0; padding: 3px 0 0 19px; }
.tab-lines { position: absolute; left: 0; top: 0; }
.doc-tabs::after { content: ""; position: absolute; inset: auto 0 0 241px; border-bottom: 1px solid #8496a0; }
.doc-tabs button { position: relative; }
.doc-tabs .current { margin-left: 21px; color: #0000b0; }
.tab-close { margin-left: 2px; }
.toolbar { display: flex; align-items: center; height: 27px; flex-shrink: 0; padding-left: 1px; border-left: 1px solid #c5ccd2; background: #efeff0; font: 13px/20px "Noto Sans", sans-serif; }
.toolbar button { width: 24px; height: 24px; }
.sep { width: 1px; height: 22px; margin-right: 9px; background: #999; }
.toolbar input { height: 21px; padding: 0 4px; border: 1px solid #fff; border-top-color: #8c8c8c; border-left-color: #8c8c8c; background: #fff; font: inherit; outline: 0; }
.page-input { width: 40px; margin: 0 4px; text-align: right; }
.find-input { width: 159px; margin: 0 2px 0 4px; }
.toolbar .prev { margin-left: 7px; }
.toolbar .next { margin-left: 2px; margin-right: -1px; }
.toolbar .find-btn { margin-right: 1px; }
.viewer { display: flex; flex: 1; min-height: 0; margin-bottom: 2px; background: #999; }
.canvas { display: flex; justify-content: center; align-items: flex-start; flex: 1; min-width: 0; padding-top: 2px; overflow: hidden; }
.sheet { background: #fff; }
.doc-scroll { width: 15px; margin-top: 1px; border-right: 0; }
.doc-scroll .thumb { flex: 320; }
.doc-scroll .gap-after { flex: 322; }

.status { display: flex; justify-content: space-between; align-items: flex-end; height: 20px; flex-shrink: 0; border-top: 1px solid #98a5b0; background: #45688b; line-height: 12px; }
.status .now { color: #fff; margin-right: 1px; }
```
